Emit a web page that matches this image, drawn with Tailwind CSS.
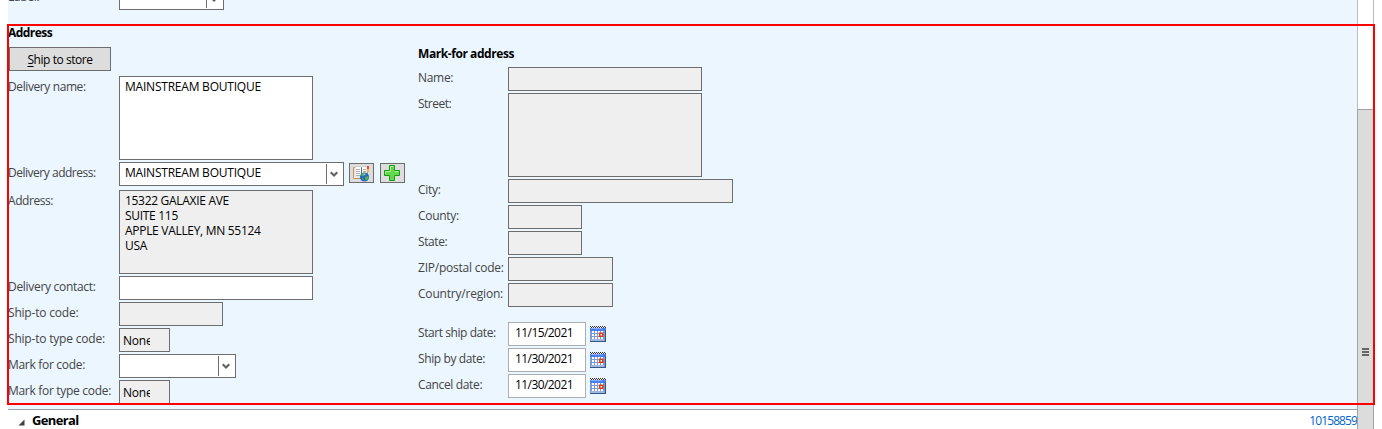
<!DOCTYPE html>
<html lang="en">
<head>
<meta charset="utf-8">
<title>Sales order – Address</title>
<script src="https://cdn.jsdelivr.net/npm/@tailwindcss/browser@4"></script>
</head>
<body class="relative h-[429px] w-[1382px] overflow-hidden bg-white font-['Open_Sans','Noto_Sans',sans-serif] text-[12px] leading-[22px] tracking-[-0.3px] text-black">
<svg class="hidden">
  <symbol id="chev" viewBox="0 0 8 7"><path d="M.7 1.200l3.300 3.300 3.300-3.300" fill="none" stroke="#606060" stroke-width="2.100"/></symbol>
  <symbol id="cal" viewBox="0 0 16 16">
    <rect width="16" height="15" y="1" fill="#7d9bce"/>
    <rect width="16" height="2" fill="#e8f0fa"/>
    <path d="M0 .5h16M1 1.500h15" stroke="#333" stroke-dasharray="1 1"/>
    <rect width="16" height="3" y="2" fill="#4a80ee"/><path d="M1 2.500h11" stroke="#86aeff"/>
    <path d="M2 6h12M2 9h12M2 12h12" stroke="#fff" stroke-width="2" stroke-dasharray="2 1"/>
    <path d="M1 14h13" stroke="#c4d4ee"/>
    <path d="M15.500 4v12M0 15.500h16" stroke="#35568c"/>
    <rect x="9.750" y="7.250" width="3" height="3" fill="#fff" stroke="#e03c10" stroke-width="1.500"/>
  </symbol>
</svg>

<main class="ml-2 flex h-[409px] w-[1349px] flex-col overflow-hidden bg-[#ebf6ff]">
  <div class="flex h-[24px] shrink-0 items-start text-[#444]">
    <span class="-mt-[14px] w-[111px]">Label:</span>
    <div class="flex h-[10px] w-[105px] items-start justify-end border border-t-0 border-[#6d6d6d] bg-white">
      <span class="h-[8px] w-px bg-[#6d6d6d]"></span>
      <svg class="-mt-[4px] ml-[3px] mr-[5px] h-[7px] w-[8px]"><use href="#chev"/></svg>
    </div>
  </div>

  <div class="flex">
    <section class="flex w-[410px] flex-col">
      <h2 class="h-[23px] font-bold leading-[18px] tracking-[-0.55px]">Address</h2>
      <button class="ml-px mb-[5px] h-6 w-[102px] border border-[#6d6d6d] bg-[#ddd] pt-px leading-[22px] tracking-[-0.45px]"><span class="underline underline-offset-2">S</span>hip to store</button>
      <div class="flex h-[86px]"><span class="w-[111px] tracking-[-0.4px] text-[#444]">Delivery name:</span><div class="h-[84px] w-[194px] border border-[#6d6d6d] bg-white pl-[5px] leading-[20px] tracking-[-0.22px]">MAINSTREAM BOUTIQUE</div></div>
      <div class="flex h-[28px]"><span class="w-[111px] tracking-[-0.48px] text-[#444]">Delivery address:</span>
        <div class="flex h-6 w-[225px] border border-[#6d6d6d] bg-white pl-[5px] leading-[20px] tracking-[-0.22px]"><span class="grow">MAINSTREAM BOUTIQUE</span><span class="mt-px h-5 w-px bg-[#6d6d6d]"></span><svg class="ml-[3px] mr-[5px] mt-[8px] h-[7px] w-[8px]"><use href="#chev"/></svg></div>
        <div class="ml-[5px] mt-px flex h-5 w-[25px] items-center justify-center border border-[#6d6d6d] bg-[#ddd]">
          <svg class="h-[17px] w-[17px]" viewBox="0 0 17 17"><path d="M.5 2.500h14v11H.5z" fill="#fdfdf8" stroke="#c98f4e"/><path d="M2 1.500h5.500l1 1 1-1H14V12H9.500l-1 1-1-1H2z" fill="#fff" stroke="#b9bcc0" stroke-width=".6"/><path d="M8.500 2.500v10" stroke="#666"/><path d="M3 4.500h4M3 6.500h4M3 8.500h4M3 10.500h4M10 4.500h3M10 6.500h3" stroke="#a4b0bc"/><path d="M14 1h2v3h-2z" fill="#e84c2c"/><path d="M14 4h2v3h-2z" fill="#f4b43c"/><circle cx="11.500" cy="12" r="4.600" fill="#2868c0"/><path d="M7.800 10l2.400-2.300 2.200.5-1 2.200-1.700 1zM12 12l3.200-1 .6 2-2.200 2.500-1.600-1zM8.500 13l1.800.5.500 2.200z" fill="#4fb050"/><path d="M10.500 9.500h2" stroke="#9cccf4"/></svg>
        </div>
        <div class="ml-[6px] mt-px flex h-5 w-[25px] items-center justify-center border border-[#6d6d6d] bg-[#ddd]">
          <svg class="-ml-px h-[16px] w-[16px]" viewBox="0 0 16 16"><path d="M5.500.5h5v5h5v5h-5v5h-5v-5h-5v-5h5z" fill="#62d84a" stroke="#159a15"/><path d="M6.500 6.500V1.500h3M1.500 9V6.500h5M10.500 6.500h4" fill="none" stroke="#b2f29c"/></svg>
        </div>
      </div>
      <div class="flex h-[86px]"><span class="w-[111px] tracking-[-0.45px] text-[#444]">Address:</span><div class="h-[84px] w-[194px] border border-[#6d6d6d] bg-[#efefef] pl-[5px] pt-[2px] leading-[15px] tracking-[-0.3px]">15322 GALAXIE AVE<br>SUITE 115<br>APPLE VALLEY, MN 55124<br>USA</div></div>
      <div class="flex h-[26px]"><span class="w-[111px] text-[#444]">Delivery contact:</span><div class="h-6 w-[194px] border border-[#6d6d6d] bg-white"></div></div>
      <div class="flex h-[26px]"><span class="w-[111px] tracking-[-0.2px] text-[#444]">Ship-to code:</span><div class="h-6 w-[104px] border border-[#6d6d6d] bg-[#efefef]"></div></div>
      <div class="flex h-[26px]"><span class="w-[111px] tracking-[-0.2px] text-[#444]">Ship-to type code:</span><div class="h-6 w-[51px] border border-[#6d6d6d] bg-[#efefef] pl-[3px]"><span class="block w-[27px] overflow-hidden pt-px tracking-[-0.2px]">None</span></div></div>
      <div class="flex h-[26px]"><span class="w-[111px] text-[#444]">Mark for code:</span><div class="flex h-6 w-[117px] justify-end border border-[#6d6d6d] bg-white"><span class="mt-px h-5 w-px bg-[#6d6d6d]"></span><svg class="ml-[3px] mr-[5px] mt-[8px] h-[7px] w-[8px]"><use href="#chev"/></svg></div></div>
      <div class="flex h-[26px]"><span class="w-[111px] text-[#444]">Mark for type code:</span><div class="h-6 w-[51px] border border-[#6d6d6d] bg-[#efefef] pl-[3px]"><span class="block w-[27px] overflow-hidden pt-px tracking-[-0.2px]">None</span></div></div>
    </section>

    <section class="flex flex-col pt-[20px] text-[#444]">
      <h2 class="h-[23px] font-bold leading-[20px] tracking-[-0.43px] text-black">Mark-for address</h2>
      <div class="flex h-[26px]"><span class="w-[90px]">Name:</span><div class="h-6 w-[194px] border border-[#6d6d6d] bg-[#efefef]"></div></div>
      <div class="flex h-[86px]"><span class="w-[90px] tracking-[-0.5px]">Street:</span><div class="h-[84px] w-[194px] border border-[#6d6d6d] bg-[#efefef]"></div></div>
      <div class="flex h-[26px]"><span class="w-[90px]">City:</span><div class="h-6 w-[225px] border border-[#6d6d6d] bg-[#efefef]"></div></div>
      <div class="flex h-[26px]"><span class="w-[90px]">County:</span><div class="h-6 w-[74px] border border-[#6d6d6d] bg-[#efefef]"></div></div>
      <div class="flex h-[26px]"><span class="w-[90px] tracking-[-0.4px]">State:</span><div class="h-6 w-[74px] border border-[#6d6d6d] bg-[#efefef]"></div></div>
      <div class="flex h-[26px]"><span class="w-[90px] tracking-[-0.23px]">ZIP/postal code:</span><div class="h-6 w-[105px] border border-[#6d6d6d] bg-[#efefef]"></div></div>
      <div class="mb-[13px] flex h-[26px]"><span class="w-[90px] tracking-[-0.2px]">Country/region:</span><div class="h-6 w-[105px] border border-[#6d6d6d] bg-[#efefef]"></div></div>
      <div class="flex h-[26px]"><span class="w-[90px] tracking-[-0.43px]">Start ship date:</span><div class="h-6 w-[78px] border border-[#abadb3] bg-white pl-[6px] leading-[20px] tracking-[-0.57px] text-black">11/15/2021</div><svg class="ml-1 mt-[4px] h-4 w-4"><use href="#cal"/></svg></div>
      <div class="flex h-[26px]"><span class="w-[90px] tracking-[-0.38px]">Ship by date:</span><div class="h-6 w-[78px] border border-[#abadb3] bg-white pl-[6px] leading-[20px] tracking-[-0.57px] text-black">11/30/2021</div><svg class="ml-1 mt-[4px] h-4 w-4"><use href="#cal"/></svg></div>
      <div class="flex h-[26px]"><span class="w-[90px] tracking-[-0.35px]">Cancel date:</span><div class="h-6 w-[78px] border border-[#abadb3] bg-white pl-[6px] leading-[20px] tracking-[-0.57px] text-black">11/30/2021</div><svg class="ml-1 mt-[4px] h-4 w-4"><use href="#cal"/></svg></div>
    </section>
  </div>
</main>

<footer class="ml-2 flex h-5 w-[1349px] items-start overflow-hidden border-t border-[#9aa0a6] bg-white">
  <svg class="ml-[10px] mt-[9px] h-[7px] w-[7px]" viewBox="0 0 7 7"><path d="M6.500 .5v6h-6z" fill="#404040"/></svg>
  <h2 class="ml-[7px] grow text-[13px] font-bold leading-[20px] tracking-[-0.65px]">General</h2>
  <a class="text-[#0066cc] tracking-[-0.9px]">10158859</a>
</footer>

<!-- vertical scrollbar -->
<aside class="absolute right-[8px] top-0 h-full w-[17px] border-x border-[#b9bcc0] bg-white pt-[109px]">
  <div class="-mx-px flex h-[320px] flex-col items-center gap-px border border-b-0 border-[#9fa3a8] bg-[#dcdcdc] pt-[238px]">
    <span class="h-[2px] w-[7px] bg-[#666]"></span><span class="h-[2px] w-[7px] bg-[#666]"></span><span class="h-[2px] w-[7px] bg-[#666]"></span>
  </div>
</aside>

<!-- highlight around the address group -->
<div class="pointer-events-none absolute left-[7px] top-[24px] h-[381px] w-[1368px] border-2 border-[#ff0000]"></div>
</body>
</html>
